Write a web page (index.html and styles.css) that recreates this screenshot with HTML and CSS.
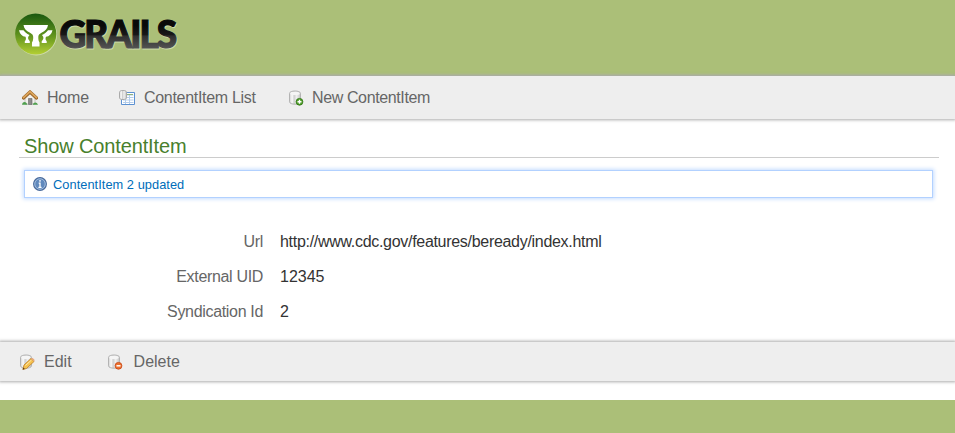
FILE: index.html
```html
<!DOCTYPE html>
<html lang="en">
<head>
<meta charset="utf-8">
<title>Show ContentItem</title>
<link rel="stylesheet" href="styles.css">
</head>
<body>
<svg width="0" height="0" class="defs" aria-hidden="true">
  <defs>
    <linearGradient id="cyl" x1="0" x2="1" y1="0" y2="0">
      <stop offset="0" stop-color="#d2d2d2"/><stop offset=".25" stop-color="#fafafa"/><stop offset=".42" stop-color="#cfcfcf"/><stop offset=".65" stop-color="#f0f0f0"/><stop offset="1" stop-color="#c2c2c2"/>
    </linearGradient>
    <g id="db">
      <path d="M1.500 3.400C1.500 .2 12.500 .2 12.500 3.400V11.800C12.500 15 1.500 15 1.500 11.800Z" fill="url(#cyl)" stroke="#b3b3b3"/>
      <ellipse cx="7" cy="3.400" rx="4.700" ry="1.700" fill="#f5f5f5"/>
    </g>
  </defs>
</svg>
<header class="logo">
  <svg width="190" height="60" viewBox="0 0 190 60" role="img" aria-label="Grails">
    <defs>
      <linearGradient id="ball" x1="0" x2="0" y1="0" y2="1"><stop offset="0" stop-color="#19570f"/><stop offset=".5" stop-color="#5b8f1c"/><stop offset="1" stop-color="#b4cf34"/></linearGradient>
      <linearGradient id="ink" gradientUnits="userSpaceOnUse" x1="0" x2="0" y1="12" y2="41"><stop offset=".2" stop-color="#090909"/><stop offset=".5" stop-color="#181818"/><stop offset=".56" stop-color="#303030"/><stop offset="1" stop-color="#555"/></linearGradient>
    </defs>
    <circle cx="26.300" cy="26.600" r="20.800" fill="#cddaab"/>
    <circle cx="25.700" cy="26" r="20.600" fill="url(#ball)"/>
    <path fill="#fff" d="M13.500 17H38c-.5 3.500-2.500 6-6.500 7.800-2.200 1.300-3.200 2.200-3.200 4.200 0 2.500.2 4 1.200 5.500v4H22v-4c1-1.500 1.200-3 1.200-5.500 0-2-1-2.900-3.200-4.200-4-1.800-6-4.300-6.500-7.800Z"/>
    <path fill="#fff" d="M9 22.200h4.500c1.300 1.800 3 3.300 6 4.800-1 1.500-1.700 2.200-1.300 3.800.3 1.200 1.300 1.700 1.600 2.400V35h-5v-1.800c1.200-1 1.500-2.800.7-4.500-3.500-.4-5.500-2.500-6.500-6.500ZM42.500 22.200H38c-1.300 1.800-3 3.300-6 4.800 1 1.500 1.700 2.200 1.300 3.800-.3 1.200-1.300 1.700-1.600 2.400V35h5v-1.800c-1.200-1-1.500-2.800-.7-4.500 3.500-.4 5.500-2.500 6.500-6.500Z"/>
    <g class="wordmark"><text x="50.300" y="41.300" fill="#cddaab" stroke="#cddaab" stroke-width="1.200" textLength="117.500" lengthAdjust="spacing">GRAILS</text><text x="49.600" y="40.400" fill="url(#ink)" stroke="url(#ink)" stroke-width="1.200" textLength="117.500" lengthAdjust="spacing">GRAILS</text></g>
  </svg>
</header>
<main>
  <nav class="bar nav">
    <a class="item home"><svg class="icon" viewBox="0 0 16 16"><path d="M3 7.500 8 3l5 4.500V14H3Z" fill="#f1f0ec" stroke="#aaa" stroke-width=".6"/><path d="M6.500 8.500h3.500v6H6.500Z" fill="#8b8b8b" stroke="#666" stroke-width=".6"/><path d="M1.500 8 8 2l6.500 6" fill="none" stroke="#9b6529" stroke-width="3.200" stroke-linecap="round"/><path d="M1.500 7.600 8 1.600l6.500 6" fill="none" stroke="#dda65c" stroke-width="1.800" stroke-linecap="round"/><path d="M0 14.800c.2-3 3-3.800 4.500-1.700l1 1.700ZM10.800 14.800c.3-2.800 4-3.500 5.200 0Z" fill="#4e9f4d"/></svg><span>Home</span></a>
    <a class="item list"><svg class="icon" viewBox="0 0 16 16"><path d="M2.500 2.500h13v12h-13Z" fill="#fff" stroke="#5c91d2"/><path d="M4 5h10.500M4 7.500h10.500M4 10h10.500M4 12.500h10.500M6.500 4v10M10.500 4v10" stroke="#b4cdeb"/><path d="M8 4.500h6" stroke="#8eb17a"/><path d="M.5 2.200C.5-.2 7.500-.2 7.500 2.200v5.700c0 2.200-7 2.200-7 0Z" fill="url(#cyl)" stroke="#aaa"/></svg><span>ContentItem List</span></a>
    <a class="item new"><svg class="icon" viewBox="0 0 16 16"><use href="#db"/><circle cx="11.500" cy="11.800" r="3.400" fill="#4f9e29" stroke="#2d7412" stroke-width=".8"/><path d="M9.500 11.800h4M11.500 9.800v4" stroke="#fff" stroke-width="1.400"/></svg><span>New ContentItem</span></a>
  </nav>
  <section class="content">
    <h1>Show ContentItem</h1>
    <div class="message"><svg viewBox="0 0 16 16"><circle cx="8" cy="8" r="7.300" fill="#6089bd" stroke="#4c6c9c" stroke-width="1.300"/><circle cx="8" cy="8" r="6" fill="none" stroke="#a9c1df"/><path d="M8 3.500v2M6.500 7H8v4.500M6.200 11.800h3.600" fill="none" stroke="#fff" stroke-width="1.500"/></svg><span>ContentItem 2 updated</span></div>
    <dl>
      <dt>Url</dt><dd class="url">http://www.cdc.gov/features/beready/index.html</dd>
      <dt>External UID</dt><dd>12345</dd>
      <dt>Syndication Id</dt><dd>2</dd>
    </dl>
  </section>
  <div class="bar buttons">
    <a class="item"><svg class="icon" viewBox="0 0 16 16"><use href="#db"/><path d="m5 11 7-6.500 3 3L7.500 14.500 3.800 15.500Z" fill="#f5c14d" stroke="#bd7d26" stroke-width=".8"/><path d="m6.500 11.500 6-5.500" stroke="#ffeab0"/><path d="m12 4.500 3 3 .7-1.500-2-2Z" fill="#e7a579"/><path d="m3.800 15.500.5-2 1.600 1.500Z" fill="#503414"/></svg><span>Edit</span></a>
    <a class="item delete"><svg class="icon" viewBox="0 0 16 16"><use href="#db"/><circle cx="11.500" cy="11.800" r="3.400" fill="#ed7130" stroke="#c44412" stroke-width=".8"/><path d="M9.500 11.800h4" stroke="#fff" stroke-width="1.500"/></svg><span>Delete</span></a>
  </div>
</main>
</body>
</html>
```
FILE: styles.css
```css
* { box-sizing: border-box; }
body {
  margin: 0;
  background: #abbf78;
  color: #333;
  font: 16px/20px "Liberation Sans", Arial, sans-serif;
}
.defs { display: block; height: 0; }
.logo { height: 76px; padding: 8px 10px; }
.logo svg { display: block; overflow: visible; }
.wordmark { font: 900 37px/1 Lato, sans-serif; }
main { height: 324px; background: #fff; box-shadow: 0 0 3px #aaa; clip-path: inset(-5px 0 0); }
.bar {
  display: flex;
  align-items: center;
  background: #eee;
  box-shadow: 0 0 3px 1px #aaa;
  color: #666;
}
.nav { height: 43px; padding-left: 22px; }
.item { display: flex; align-items: center; }
.item span { white-space: nowrap; }
.icon { width: 16px; height: 16px; margin-right: 9px; }
.home { width: 97px; letter-spacing: -.2px; }
.list { width: 169px; letter-spacing: -.3px; }
.new { letter-spacing: -.38px; }
.new .icon { margin-right: 8px; }
.content { height: 223px; padding: 16px 16px 0 19px; }
h1 {
  height: 23px;
  margin: 0;
  padding-left: 5px;
  border-bottom: 1px solid #ccc;
  color: #48802c;
  font-size: 20px;
  font-weight: 400;
  line-height: 22px;
  letter-spacing: -.13px;
}
.message {
  display: flex;
  align-items: center;
  height: 28px;
  margin: 12px 6px 0 5px;
  padding-left: 8px;
  border: 1px solid #b2d1ff;
  box-shadow: 0 0 4px 1px #c5dcff;
  color: #006dba;
  font-size: 12.8px;
  letter-spacing: .05px;
}
.message svg { width: 14px; height: 14px; margin-right: 6px; }
.message span { padding-top: 2px; }
dl {
  display: grid;
  grid-template-columns: 244px 1fr;
  column-gap: 17px;
  row-gap: 15px;
  margin: 34px 0 0;
}
dt { color: #666; text-align: right; letter-spacing: -.33px; }
dd { margin: 0; }
.url { letter-spacing: -.3px; }
.buttons { height: 39px; padding-left: 19px; gap: 35px; }
.delete .icon { margin-right: 11px; }
```
